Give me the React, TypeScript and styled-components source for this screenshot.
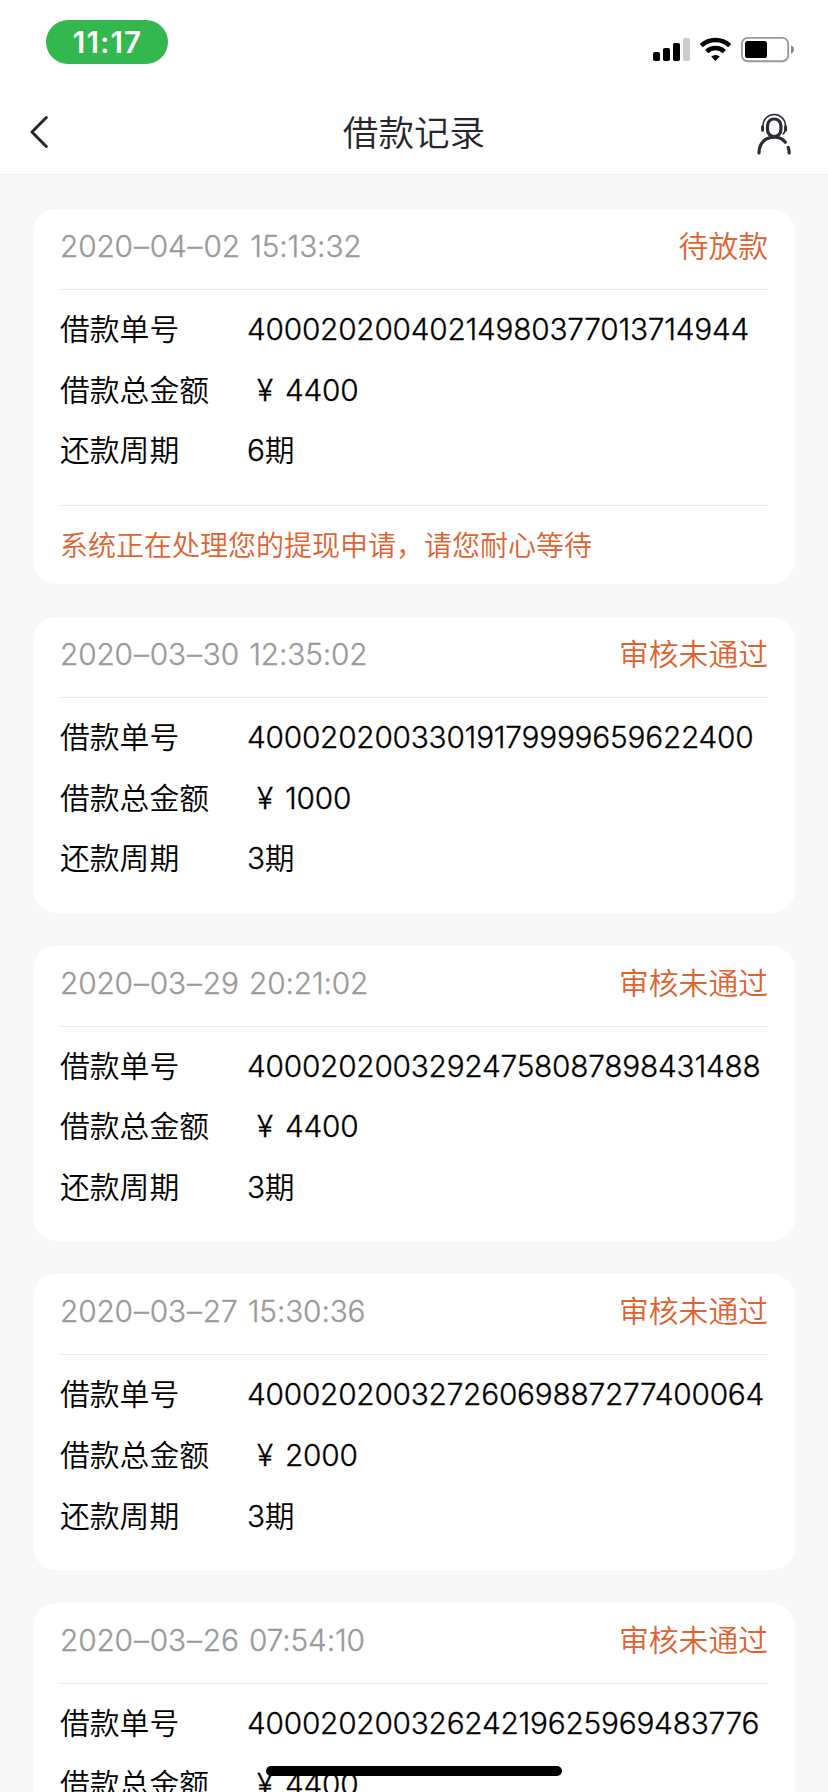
import React from 'react';
import styled, { createGlobalStyle } from 'styled-components';

const GlobalStyle = createGlobalStyle`
  * { box-sizing: border-box; }
  html, body { margin: 0; padding: 0; background: #f7f7f7; }
  body {
    font-family: Inter, "Noto Sans CJK SC", sans-serif;
    font-size: 29.8px;
    font-weight: 350;
    color: #000;
  }
`;

const Screen = styled.div`
  position: relative;
  width: 828px;
  height: 1792px;
  overflow: hidden;
  background: #f7f7f7;
`;

const TopArea = styled.header`
  height: 175px;
  background: #fff;
  border-bottom: 1px solid #f2f2f2;
`;

const StatusBar = styled.div`
  display: flex;
  justify-content: space-between;
  height: 88px;
  padding: 20px 33px 0 46px;
`;

const TimePill = styled.div`
  width: 122px;
  height: 44px;
  padding-left: 1px;
  border-radius: 22px;
  background: #33b850;
  color: #fff;
  font-size: 29.5px;
  font-weight: 580;
  letter-spacing: 1.1px;
  line-height: 45px;
  text-align: center;
`;

const StatusIcons = styled.svg`
  display: block;
  margin-top: 14px;
`;

const NavBar = styled.div`
  display: grid;
  grid-template-columns: 80px 1fr 80px;
  align-items: center;
  height: 87px;
  padding: 0 30px;
`;

const Title = styled.h1`
  margin: 4px 0 0;
  font-size: 35.6px;
  font-weight: 350;
  line-height: 50px;
  text-align: center;
  color: #26262c;
`;

const BackIcon = styled.svg`
  display: block;
`;

const ServiceIcon = styled.svg`
  display: block;
  justify-self: end;
  margin: 5px 4px 0 0;
`;

const RecordList = styled.main`
  display: flex;
  flex-direction: column;
  gap: 33.1px;
  padding: 34px 33px 0;
`;

const Card = styled.article`
  flex: none;
  padding: 0 27px;
  border-radius: 24px;
  background: #fff;
`;

const CardHead = styled.div`
  display: flex;
  justify-content: space-between;
  height: 80.9px;
  line-height: 75px;
  border-bottom: 1px solid #ebebeb;
`;

const Timestamp = styled.time`
  color: #999;
  letter-spacing: -0.12px;
  word-spacing: 2px;
  font-feature-settings: "calt" 0;
  -webkit-text-stroke: 0.3px currentColor;
`;

const Dash = styled.span`
  margin: 0 1px;
`;

const Status = styled.span`
  color: #e0622f;
`;

const Details = styled.dl`
  margin: 0;
  padding: 9.2px 0 23.7px;
`;

const DetailRow = styled.div`
  display: flex;
  height: 60.6px;
  line-height: 60.6px;
`;

const Label = styled.dt`
  width: 187px;
`;

const Value = styled.dd`
  margin: 0;
  white-space: nowrap;
  letter-spacing: -0.22px;
  -webkit-text-stroke: 0.3px currentColor;
`;

const Yen = styled.span`
  display: inline-block;
  width: 38px;
  padding-left: 10px;
`;

const Unit = styled.span`
  -webkit-text-stroke: 0;
`;

const Notice = styled.p`
  height: 79.4px;
  margin: 0;
  border-top: 1px solid #ebebeb;
  font-size: 28px;
  line-height: 81px;
  color: #e0622f;
`;

const HomeIndicator = styled.div`
  position: absolute;
  left: 266px;
  bottom: 16px;
  width: 296px;
  height: 10px;
  border-radius: 5px;
  background: #000;
`;

interface LoanRecord {
  date: string[];
  time: string;
  status: string;
  orderNo: string;
  amount: number;
  periods: number;
  notice?: string;
}

const records: LoanRecord[] = [
  { date: ['2020', '04', '02'], time: '15:13:32', status: '待放款', orderNo: '40002020040214980377013714944', amount: 4400, periods: 6, notice: '系统正在处理您的提现申请，请您耐心等待' },
  { date: ['2020', '03', '30'], time: '12:35:02', status: '审核未通过', orderNo: '40002020033019179999659622400', amount: 1000, periods: 3 },
  { date: ['2020', '03', '29'], time: '20:21:02', status: '审核未通过', orderNo: '40002020032924758087898431488', amount: 4400, periods: 3 },
  { date: ['2020', '03', '27'], time: '15:30:36', status: '审核未通过', orderNo: '40002020032726069887277400064', amount: 2000, periods: 3 },
  { date: ['2020', '03', '26'], time: '07:54:10', status: '审核未通过', orderNo: '40002020032624219625969483776', amount: 4400, periods: 3 },
];

function RecordCard({ record }: { record: LoanRecord }) {
  const [year, month, day] = record.date;
  return (
    <Card>
      <CardHead>
        <Timestamp>{year}<Dash>–</Dash>{month}<Dash>–</Dash>{day} {record.time}</Timestamp>
        <Status>{record.status}</Status>
      </CardHead>
      <Details>
        <DetailRow>
          <Label>借款单号</Label>
          <Value>{record.orderNo}</Value>
        </DetailRow>
        <DetailRow>
          <Label>借款总金额</Label>
          <Value><Yen>¥</Yen>{record.amount}</Value>
        </DetailRow>
        <DetailRow>
          <Label>还款周期</Label>
          <Value>{record.periods}<Unit>期</Unit></Value>
        </DetailRow>
      </Details>
      {record.notice && <Notice>{record.notice}</Notice>}
    </Card>
  );
}

export default function App() {
  return (
    <Screen lang="zh-CN">
      <GlobalStyle />
      <TopArea>
        <StatusBar>
          <TimePill>11:17</TimePill>
          <StatusIcons width="143" height="30" viewBox="652 34 143 30">
            <rect x="653" y="52" width="7" height="9" rx="1.8" />
            <rect x="663" y="48" width="7" height="13" rx="1.8" />
            <rect x="673" y="43" width="7" height="18" rx="1.8" />
            <rect x="683" y="38" width="7" height="23" rx="1.8" fill="#ccc" />
            <g fill="none" stroke="#000" strokeWidth="4.6">
              <path d="M701.3 45.7a20.5 20.5 0 0 1 28.4 0" />
              <path d="M706.7 51.6a12.7 12.7 0 0 1 17.6 0" />
            </g>
            <path d="M715.5 61l-4.3-4.4a6.4 6.4 0 0 1 8.6 0z" />
            <rect x="741.9" y="37.9" width="46.3" height="23.3" rx="5.8" fill="none" stroke="#999" strokeWidth="1.9" />
            <rect x="745" y="41" width="22" height="17" rx="2.6" />
            <path d="M791 45.2c4 1.6 4 7 0 8.6z" fill="#888" />
          </StatusIcons>
        </StatusBar>
        <NavBar>
          <BackIcon width="20" height="34" viewBox="30 115 20 34" fill="none" stroke="#26262c" strokeWidth="3" strokeLinecap="round" strokeLinejoin="round">
            <path d="M46.3 117.5L32 132l14.3 14.5" />
          </BackIcon>
          <Title>借款记录</Title>
          <ServiceIcon width="38" height="44" viewBox="756 112 38 44" fill="none" stroke="#2b2b33" strokeLinecap="round">
            <rect x="767.5" y="119" width="13.4" height="17.5" rx="6.7" strokeWidth="3.2" />
            <path d="M763 127v-1.5a11.2 11 0 0 1 22.4 0v1.5c0 3.5-.7 5.5-2.2 7" strokeWidth="1.6" />
            <path d="M762.6 126.8v3.6M785.6 126.8v3.6" strokeWidth="2.9" />
            <path d="M759 153c0-10 6.5-15.8 15.2-15.8 4.6 0 8.4 1.5 11.1 5" strokeWidth="3.2" />
            <path d="M788.2 147.5c.7 1.7 1 3.5 1 5.5" strokeWidth="3.2" />
          </ServiceIcon>
        </NavBar>
      </TopArea>
      <RecordList>
        {records.map((record) => (
          <RecordCard key={record.orderNo} record={record} />
        ))}
      </RecordList>
      <HomeIndicator />
    </Screen>
  );
}
